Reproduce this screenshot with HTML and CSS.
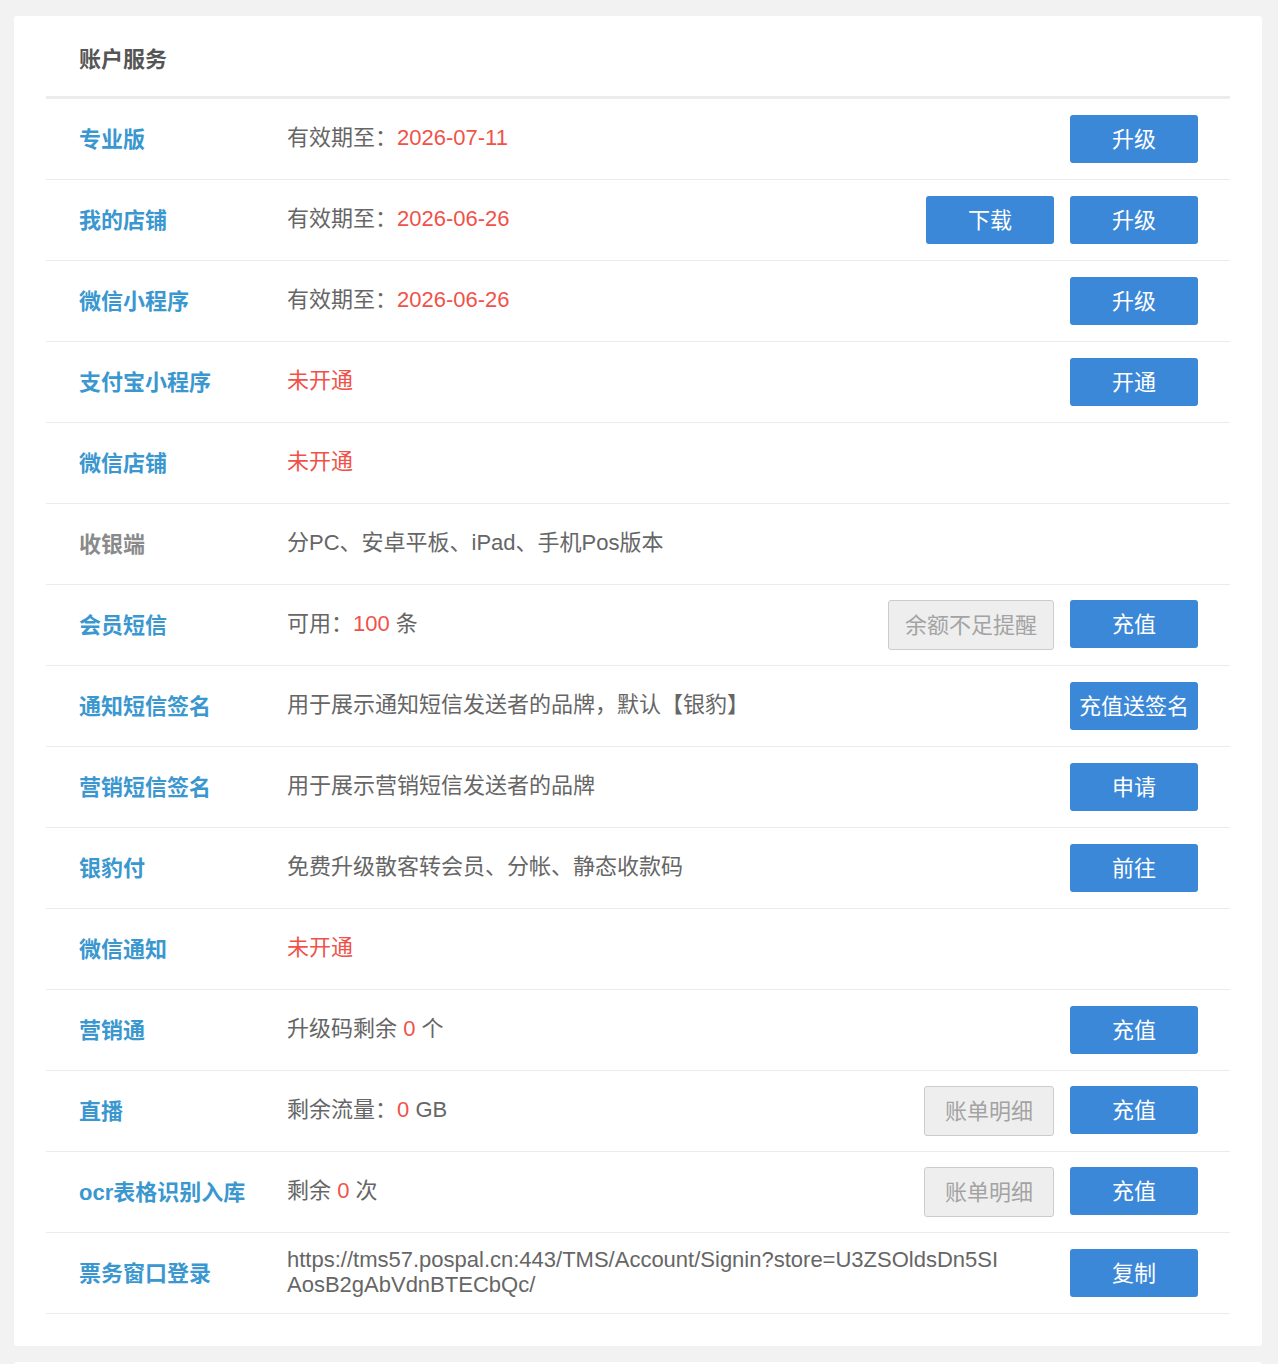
FILE: index.html
```html
<!DOCTYPE html>
<html lang="zh-CN">
<head>
<meta charset="utf-8">
<title>账户服务</title>
<link rel="stylesheet" href="styles.css">
</head>
<body>
<div class="card">
  <div class="card-header">账户服务</div>
  <div class="row">
    <div class="label">专业版</div>
    <div class="value">有效期至：<span class="red">2026-07-11</span></div>
    <div class="actions"><button class="btn">升级</button></div>
  </div>
  <div class="row">
    <div class="label">我的店铺</div>
    <div class="value">有效期至：<span class="red">2026-06-26</span></div>
    <div class="actions"><button class="btn">下载</button><button class="btn">升级</button></div>
  </div>
  <div class="row">
    <div class="label">微信小程序</div>
    <div class="value">有效期至：<span class="red">2026-06-26</span></div>
    <div class="actions"><button class="btn">升级</button></div>
  </div>
  <div class="row">
    <div class="label">支付宝小程序</div>
    <div class="value"><span class="red">未开通</span></div>
    <div class="actions"><button class="btn">开通</button></div>
  </div>
  <div class="row">
    <div class="label">微信店铺</div>
    <div class="value"><span class="red">未开通</span></div>
  </div>
  <div class="row">
    <div class="label label-gray">收银端</div>
    <div class="value">分PC、安卓平板、iPad、手机Pos版本</div>
  </div>
  <div class="row">
    <div class="label">会员短信</div>
    <div class="value">可用：<span class="red">100</span> 条</div>
    <div class="actions"><button class="btn btn-gray">余额不足提醒</button><button class="btn">充值</button></div>
  </div>
  <div class="row">
    <div class="label">通知短信签名</div>
    <div class="value">用于展示通知短信发送者的品牌，默认【银豹】</div>
    <div class="actions"><button class="btn">充值送签名</button></div>
  </div>
  <div class="row">
    <div class="label">营销短信签名</div>
    <div class="value">用于展示营销短信发送者的品牌</div>
    <div class="actions"><button class="btn">申请</button></div>
  </div>
  <div class="row">
    <div class="label">银豹付</div>
    <div class="value">免费升级散客转会员、分帐、静态收款码</div>
    <div class="actions"><button class="btn">前往</button></div>
  </div>
  <div class="row">
    <div class="label">微信通知</div>
    <div class="value"><span class="red">未开通</span></div>
  </div>
  <div class="row">
    <div class="label">营销通</div>
    <div class="value">升级码剩余 <span class="red">0</span> 个</div>
    <div class="actions"><button class="btn">充值</button></div>
  </div>
  <div class="row">
    <div class="label">直播</div>
    <div class="value">剩余流量：<span class="red">0</span> GB</div>
    <div class="actions"><button class="btn btn-gray">账单明细</button><button class="btn">充值</button></div>
  </div>
  <div class="row">
    <div class="label">ocr表格识别入库</div>
    <div class="value">剩余 <span class="red">0</span> 次</div>
    <div class="actions"><button class="btn btn-gray">账单明细</button><button class="btn">充值</button></div>
  </div>
  <div class="row">
    <div class="label">票务窗口登录</div>
    <div class="value value-url">https://tms57.pospal.cn:443/TMS/Account/Signin?store=U3ZSOldsDn5SIAosB2gAbVdnBTECbQc/</div>
    <div class="actions"><button class="btn">复制</button></div>
  </div>
</div>
<div class="card card-next"></div>
</body>
</html>
```

FILE: styles.css
```css
html, body {
  margin: 0;
  padding: 0;
  background: #f2f2f2;
}

body {
  padding: 16px 16px 0 14px;
  font-family: "Liberation Sans", "Noto Sans CJK SC", sans-serif;
  font-size: 22px;
  color: #666666;
}

.card {
  background: #ffffff;
  border-radius: 3px;
  padding: 0 32px 32px 32px;
}

.card-next {
  margin-top: 16px;
  height: 60px;
  padding: 0;
}

.card-header {
  padding: 33px 33px 0 33px;
  height: 83px;
  box-sizing: border-box;
  line-height: 22px;
  font-weight: bold;
  color: #555555;
  border-bottom: 3px solid #ececec;
}

.row {
  display: flex;
  align-items: center;
  height: 81px;
  box-sizing: border-box;
  padding: 0 32px 0 33px;
  border-bottom: 1px solid #ebebeb;
}

.label {
  width: 208px;
  flex: none;
  padding-bottom: 5px;
  font-weight: bold;
  color: #3a97cf;
}

.label-gray {
  color: #8a8a8a;
}

.value {
  color: #666666;
  max-width: 720px;
  padding-bottom: 3px;
  line-height: 25px;
}

.value-url {
  word-break: break-all;
}

.red {
  color: #f0524a;
}

.actions {
  margin-left: auto;
  display: flex;
  gap: 16px;
  flex: none;
}

.btn {
  box-sizing: border-box;
  height: 48px;
  min-width: 128px;
  padding: 0 9px 5px;
  border: none;
  border-radius: 3px;
  background: #3b88d8;
  color: #ffffff;
  font-family: "Liberation Sans", "Noto Sans CJK SC", sans-serif;
  font-size: 22px;
}

.btn-gray {
  height: 50px;
  min-width: 130px;
  padding: 0 16px 5px;
  background: #eeeeee;
  border: 1px solid #cccccc;
  color: #a3a3a3;
}
```
